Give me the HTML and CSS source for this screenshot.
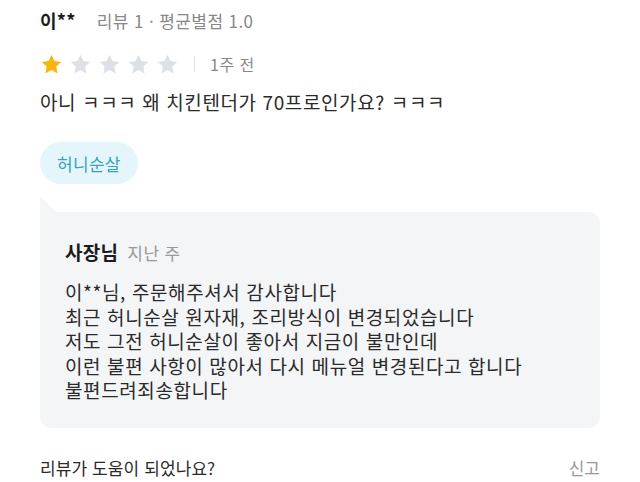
FILE: index.html
```html
<!DOCTYPE html>
<html lang="ko">
<head>
<meta charset="utf-8">
<link rel="stylesheet" href="styles.css">
</head>
<body>
<div class="review">
  <div class="head">
    <span class="name">이**</span>
    <span class="meta">리뷰 1 · 평균별점 1.0</span>
  </div>
  <div class="rating">
    <div class="stars">
      <svg class="star on" viewBox="0 0 24 24"><path d="M12 1.8l3.1 6.6 7.1.9-5.2 4.9 1.3 7.1L12 17.8l-6.3 3.5 1.3-7.1-5.2-4.9 7.1-.9z"/></svg>
      <svg class="star" viewBox="0 0 24 24"><path d="M12 1.8l3.1 6.6 7.1.9-5.2 4.9 1.3 7.1L12 17.8l-6.3 3.5 1.3-7.1-5.2-4.9 7.1-.9z"/></svg>
      <svg class="star" viewBox="0 0 24 24"><path d="M12 1.8l3.1 6.6 7.1.9-5.2 4.9 1.3 7.1L12 17.8l-6.3 3.5 1.3-7.1-5.2-4.9 7.1-.9z"/></svg>
      <svg class="star" viewBox="0 0 24 24"><path d="M12 1.8l3.1 6.6 7.1.9-5.2 4.9 1.3 7.1L12 17.8l-6.3 3.5 1.3-7.1-5.2-4.9 7.1-.9z"/></svg>
      <svg class="star" viewBox="0 0 24 24"><path d="M12 1.8l3.1 6.6 7.1.9-5.2 4.9 1.3 7.1L12 17.8l-6.3 3.5 1.3-7.1-5.2-4.9 7.1-.9z"/></svg>
    </div>
    <span class="sep"></span>
    <span class="date">1주 전</span>
  </div>
  <p class="text">아니 ㅋㅋㅋ 왜 치킨텐더가 70프로인가요? ㅋㅋㅋ</p>
  <div class="chips"><span class="chip">허니순살</span></div>
  <div class="reply">
    <div class="reply-head">
      <span class="owner">사장님</span>
      <span class="when">지난 주</span>
    </div>
    <p class="reply-text">이**님, 주문해주셔서 감사합니다<br>최근 허니순살 원자재, 조리방식이 변경되었습니다<br>저도 그전 허니순살이 좋아서 지금이 불만인데<br>이런 불편 사항이 많아서 다시 메뉴얼 변경된다고 합니다<br>불편드려죄송합니다</p>
  </div>
  <div class="footer">
    <span class="helpful">리뷰가 도움이 되었나요?</span>
    <span class="report">신고</span>
  </div>
</div>
</body>
</html>
```

FILE: styles.css
```css
* { box-sizing: border-box; }
html, body {
  margin: 0;
  padding: 0;
  background: #ffffff;
}
body {
  font-family: "Noto Sans CJK KR", "Noto Sans", sans-serif;
  color: #222;
}
.review {
  padding: 7px 40px 0 40px;
  width: 640px;
}
.head {
  display: flex;
  align-items: baseline;
  height: 30px;
}
.name {
  font-size: 18px;
  font-weight: 700;
  color: #1c1c1c;
  letter-spacing: 0.3px;
}
.meta {
  margin-left: 21px;
  font-size: 17px;
  letter-spacing: 0.4px;
  color: #888;
}
.rating {
  display: flex;
  align-items: center;
  margin-top: 13px;
  height: 28px;
}
.stars {
  display: flex;
  gap: 6px;
}
.star {
  width: 23px;
  height: 23px;
  display: block;
}
.star path { fill: #dde0e5; }
.star.on path { fill: #f6b60f; }
.sep {
  width: 1px;
  height: 16px;
  background: #e2e2e2;
  margin-left: 15px;
}
.date {
  margin-left: 15px;
  font-size: 16px;
  letter-spacing: 0.5px;
  color: #888;
}
.text {
  margin: 11px 0 0 0;
  font-size: 19px;
  letter-spacing: 0.6px;
  line-height: 26px;
  color: #2a2a2a;
}
.chips {
  margin-top: 27px;
  display: flex;
}
.chip {
  display: inline-flex;
  align-items: center;
  height: 42px;
  padding: 0 17px;
  border-radius: 21px;
  background: #e4f6fb;
  color: #3aa2b3;
  font-size: 17px;
  letter-spacing: 0.3px;
}
.reply {
  position: relative;
  margin-top: 28px;
  background: #f4f5f7;
  border-radius: 0 12px 12px 12px;
  padding: 26px 25px 25px 25px;
  width: 560px;
}
.reply::before {
  content: "";
  position: absolute;
  left: 0;
  top: -16px;
  width: 0;
  height: 0;
  border-left: 16px solid #f4f5f7;
  border-top: 16px solid transparent;
}
.reply-head {
  display: flex;
  align-items: baseline;
  height: 30px;
}
.owner {
  font-size: 19px;
  font-weight: 700;
  color: #1c1c1c;
  letter-spacing: 0.3px;
}
.when {
  margin-left: 9px;
  font-size: 17px;
  letter-spacing: 0.4px;
  color: #999;
}
.reply-text {
  margin: 12px 0 0 0;
  font-size: 19px;
  letter-spacing: 0.6px;
  line-height: 24.5px;
  color: #2a2a2a;
}
.footer {
  display: flex;
  justify-content: space-between;
  align-items: center;
  margin-top: 27px;
  height: 26px;
}
.helpful {
  font-size: 17px;
  letter-spacing: 0.1px;
  color: #2a2a2a;
}
.report {
  font-size: 17px;
  color: #999;
}
```
